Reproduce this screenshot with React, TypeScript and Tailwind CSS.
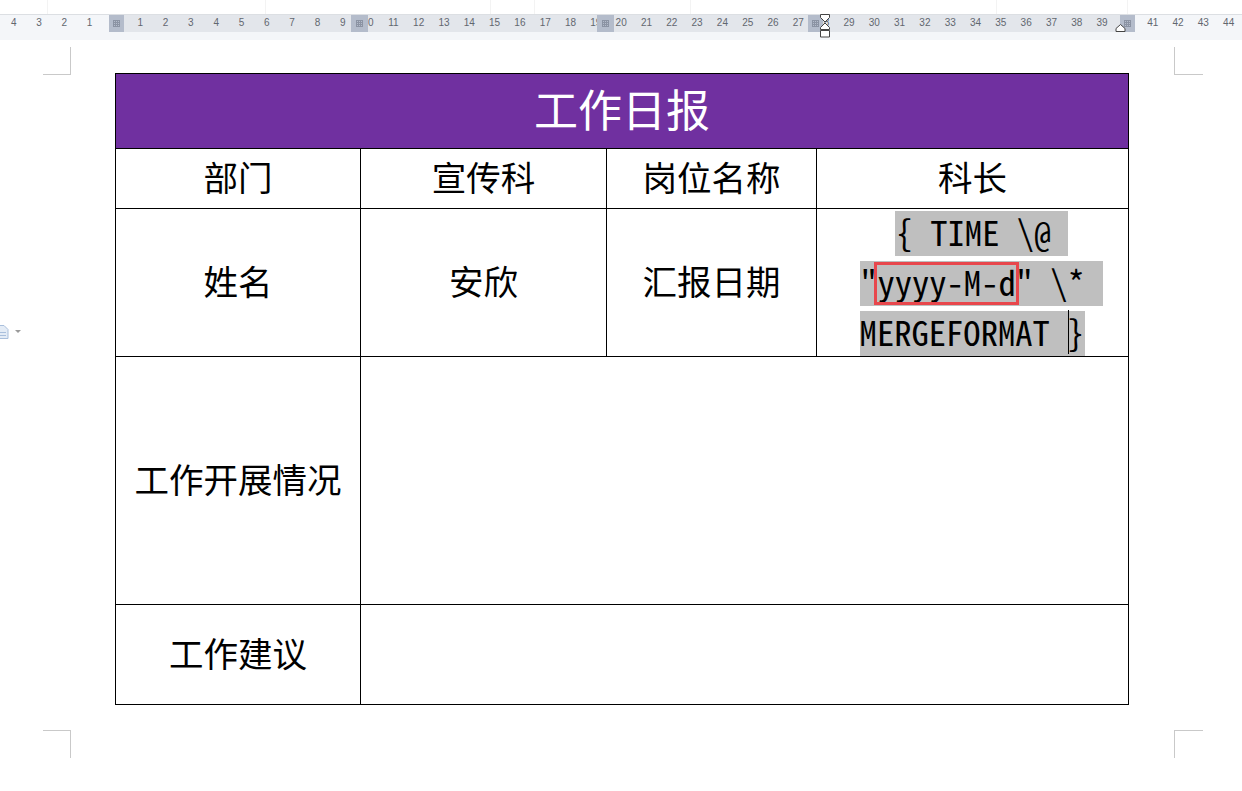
const cjk = "font-['Noto_Sans_CJK_SC','Liberation_Sans',sans-serif]";
const rulerNumbers = [
  "4", "3", "2", "1", "",
  ...Array.from({ length: 44 }, (_, i) => String(i + 1)),
];

// column handles on the ruler: [left, width]
const handles = [
  "left-[109px] w-[15px]",
  "left-[351px] w-[17px]",
  "left-[597px] w-[17px]",
  "left-[808px] w-[15px]",
  "left-[1120px] w-[15px]",
];

function HandleGrid() {
  return (
    <svg width="7" height="7" viewBox="0 0 7 7" className="text-[#8b93a3]">
      <path
        d="M0 .5h7M0 2.5h7M0 4.5h7M0 6.5h7M.5 0v7M2.5 0v7M4.5 0v7M6.5 0v7"
        stroke="currentColor"
        strokeWidth="1"
      />
    </svg>
  );
}

function Ruler() {
  return (
    <div className="relative h-[40px] pt-[14px]">
      <div className="relative h-[26px] border-t border-[#dcdfe3] bg-[#f4f6f9]">
        <div className="absolute left-[109px] top-0 h-[17px] w-[1026px] bg-[#e3e6eb]" />
        <div className="relative flex h-[17px] pl-[1px] pt-[1px]">
          {rulerNumbers.map((n, i) => (
            <span
              key={i}
              className="w-[25.32px] shrink-0 text-center font-['Liberation_Sans',sans-serif] text-[10px] leading-[14px] text-[#62676f]"
            >
              {n}
            </span>
          ))}
        </div>
        {handles.map((h) => (
          <div
            key={h}
            className={`absolute top-0 flex h-[17px] items-center justify-center bg-[#b4bccb] ${h}`}
          >
            <HandleGrid />
          </div>
        ))}
        <svg
          width="12"
          height="24"
          viewBox="0 0 12 24"
          className="absolute left-[819px] top-[-1px]"
          fill="#fff"
          stroke="#444"
        >
          <path d="M1.5.5h9v3L6 8 1.5 3.5z" />
          <path d="M6 9l4.5 4.5v2h-9v-2z" />
          <path d="M1.5 16.5h9v6.5h-9z" />
        </svg>
        <svg
          width="11"
          height="8"
          viewBox="0 0 11 8"
          className="absolute left-[1115px] top-[9px]"
          fill="#fff"
          stroke="#444"
        >
          <path d="M5.5 .5l4.5 4v3H1v-3z" />
        </svg>
      </div>
      {/* faint page guides above the ruler */}
      <div className="absolute left-[47px] top-0 h-[14px] w-px bg-[#f3f3f3]" />
      <div className="absolute left-[265px] top-0 h-[14px] w-px bg-[#f3f3f3]" />
      <div className="absolute left-[490px] top-0 h-[14px] w-px bg-[#f3f3f3]" />
      <div className="absolute left-[534px] top-0 h-[14px] w-px bg-[#f3f3f3]" />
      <div className="absolute left-[690px] top-0 h-[14px] w-px bg-[#f3f3f3]" />
      <div className="absolute left-[996px] top-0 h-[14px] w-px bg-[#f3f3f3]" />
      <div className="absolute left-[1127px] top-0 h-[14px] w-px bg-[#f3f3f3]" />
    </div>
  );
}

function CropMarks() {
  const line = "absolute bg-[#c9c9c9]";
  return (
    <>
      <div className={`${line} left-[43px] top-[74px] h-px w-[28px]`} />
      <div className={`${line} left-[70px] top-[47px] h-[27px] w-px`} />
      <div className={`${line} left-[1174px] top-[74px] h-px w-[29px]`} />
      <div className={`${line} left-[1174px] top-[47px] h-[27px] w-px`} />
      <div className={`${line} left-[43px] top-[730px] h-px w-[28px]`} />
      <div className={`${line} left-[70px] top-[730px] h-[28px] w-px`} />
      <div className={`${line} left-[1174px] top-[730px] h-px w-[29px]`} />
      <div className={`${line} left-[1174px] top-[730px] h-[28px] w-px`} />
    </>
  );
}

function Cell({ className = "", children }: { className?: string; children?: React.ReactNode }) {
  return (
    <div
      className={`flex items-center justify-center border-r border-b border-black pb-[5px] text-[34.5px] leading-none text-black ${className}`}
    >
      {children}
    </div>
  );
}

function FieldCode() {
  const line =
    "flex h-[45px] items-center bg-[#bfbfbf] pb-[5px] font-['Noto_Sans_Mono_CJK_SC','Liberation_Mono',monospace] text-[34.6px] leading-none whitespace-pre text-black";
  return (
    <div className="flex flex-col items-center gap-[5px] pt-[2px]">
      <div className={`${line} ml-[18px] pl-[1px] pr-[17px]`}>{"{ TIME \\@"}</div>
      <div className={`${line} ml-[18px] pr-[18px]`}>
        "
        <span className="relative">
          yyyy-M-d
          <span className="absolute -inset-x-[3px] -top-[2px] -bottom-[7px] border-[3px] border-[#e8474c]" />
        </span>
        {'" \\*'}
      </div>
      <div className={line}>
        {"MERGEFORMAT "}
        <span className="relative pr-[1px]">
          {"}"}
          <span className="absolute left-[1px] top-[-4px] h-[44px] w-px bg-black" />
        </span>
      </div>
    </div>
  );
}

function Report() {
  return (
    <div
      className={`ml-[115px] mt-[33px] grid w-[1014px] grid-cols-[245px_246px_210px_312px] grid-rows-[75px_60px_148px_248px_100px] border-t border-l border-black ${cjk}`}
    >
      <Cell className="col-span-4 bg-[#7030a0] !pb-[7px] !text-[44px] !text-white">工作日报</Cell>
      <Cell>部门</Cell>
      <Cell>宣传科</Cell>
      <Cell>岗位名称</Cell>
      <Cell>科长</Cell>
      <Cell>姓名</Cell>
      <Cell>安欣</Cell>
      <Cell>汇报日期</Cell>
      <Cell className="!items-start !pb-0">
        <FieldCode />
      </Cell>
      <Cell>工作开展情况</Cell>
      <Cell className="col-span-3" />
      <Cell>工作建议</Cell>
      <Cell className="col-span-3" />
    </div>
  );
}

export default function App() {
  return (
    <div className="relative h-[791px] w-[1242px] overflow-hidden bg-white">
      <Ruler />
      <CropMarks />
      <Report />
      {/* floating layout icon, cut off by the window edge */}
      <svg
        width="9"
        height="16"
        viewBox="0 0 9 16"
        className="absolute left-0 top-[324px]"
        fill="none"
        stroke="#a9bfdc"
      >
        <path d="M-3 1.5h7l4 4v9H-3z" fill="#e4ecf6" />
        <path d="M-1 8.5h7M-1 11.5h7" />
      </svg>
      <div className="absolute left-[15px] top-[330px] h-0 w-0 border-x-[3px] border-t-[3px] border-x-transparent border-t-[#9a9a9a]" />
    </div>
  );
}
